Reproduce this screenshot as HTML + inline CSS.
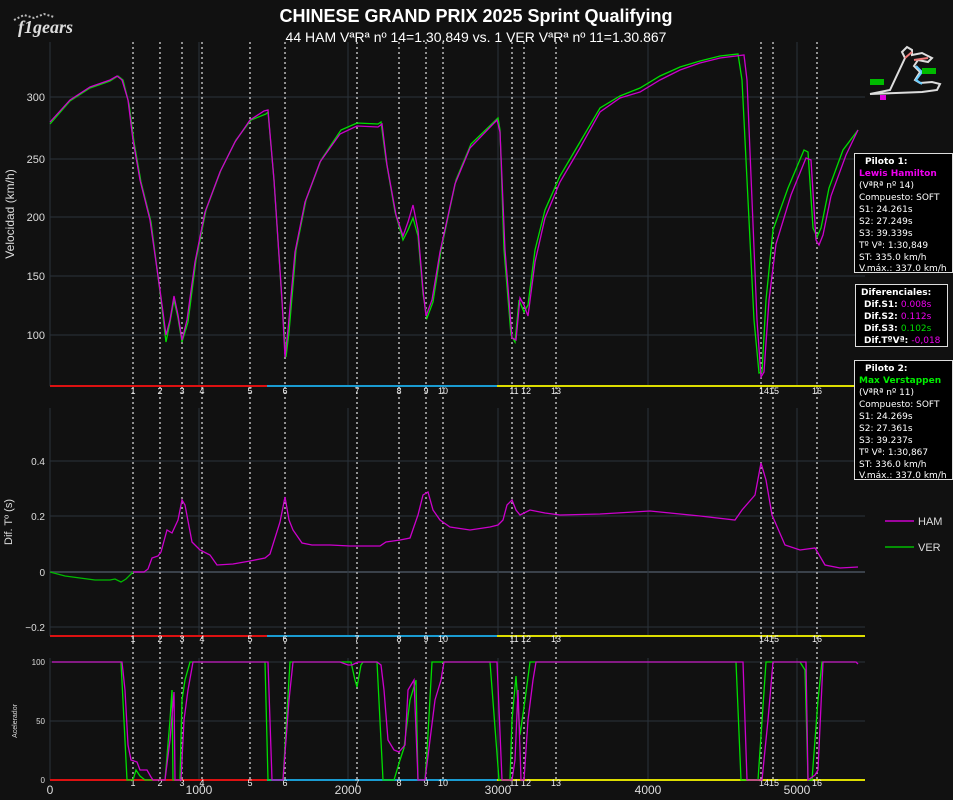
<!DOCTYPE html>
<html><head><meta charset="utf-8"><style>
html,body{margin:0;padding:0;background:#111111;}
svg{display:block;font-family:"Liberation Sans",Verdana,sans-serif;}
</style></head><body>
<svg width="953" height="800" viewBox="0 0 953 800" xmlns="http://www.w3.org/2000/svg">
<defs>
<g id="lbl" fill="#eeeeee" font-size="9" text-anchor="middle">
<text x="133" y="0">1</text><text x="160" y="0">2</text><text x="182" y="0">3</text><text x="202" y="0">4</text><text x="250" y="0">5</text><text x="285" y="0">6</text><text x="357" y="0">7</text><text x="399" y="0">8</text><text x="426" y="0">9</text><text x="443" y="0">10</text><text x="514" y="0">11</text><text x="526" y="0">12</text><text x="556" y="0">13</text><text x="764" y="0">14</text><text x="774" y="0">15</text><text x="817" y="0">16</text>
</g>
</defs>
<rect width="953" height="800" fill="#111111"/>
<!-- logo -->
<text x="18" y="33" fill="#ddd" font-size="18" font-style="italic" font-weight="bold" font-family="Liberation Serif,serif">f1gears</text>
<path d="M14 20 l10 -5 10 3 10 -4 10 3" stroke="#bbb" stroke-width="2" fill="none" stroke-dasharray="2 2"/>
<!-- title -->
<text x="476" y="22" fill="#fff" font-size="18" font-weight="bold" text-anchor="middle">CHINESE GRAND PRIX 2025 Sprint Qualifying</text>
<text x="476" y="42" fill="#fff" font-size="14" text-anchor="middle">44 HAM VªRª nº  14=1.30.849 vs. 1 VER VªRª nº  11=1.30.867</text>

<!-- grids -->
<g stroke="#2b323b" stroke-width="1">
<line x1="50" y1="97" x2="865" y2="97"/><line x1="50" y1="159" x2="865" y2="159"/><line x1="50" y1="217" x2="865" y2="217"/><line x1="50" y1="276" x2="865" y2="276"/><line x1="50" y1="335" x2="865" y2="335"/>
<line x1="50" y1="461" x2="865" y2="461"/><line x1="50" y1="516" x2="865" y2="516"/><line x1="50" y1="572" x2="865" y2="572" stroke="#3a414a" stroke-width="2"/><line x1="50" y1="627" x2="865" y2="627"/>
<line x1="50" y1="662" x2="865" y2="662"/><line x1="50" y1="721" x2="865" y2="721"/>
<line x1="50" y1="42" x2="50" y2="386"/><line x1="199" y1="42" x2="199" y2="386"/><line x1="348" y1="42" x2="348" y2="386"/><line x1="498" y1="42" x2="498" y2="386"/><line x1="648" y1="42" x2="648" y2="386"/><line x1="797" y1="42" x2="797" y2="386"/>
<line x1="50" y1="408" x2="50" y2="636"/><line x1="199" y1="408" x2="199" y2="636"/><line x1="348" y1="408" x2="348" y2="636"/><line x1="498" y1="408" x2="498" y2="636"/><line x1="648" y1="408" x2="648" y2="636"/><line x1="797" y1="408" x2="797" y2="636"/>
<line x1="50" y1="658" x2="50" y2="780"/><line x1="199" y1="658" x2="199" y2="780"/><line x1="348" y1="658" x2="348" y2="780"/><line x1="498" y1="658" x2="498" y2="780"/><line x1="648" y1="658" x2="648" y2="780"/><line x1="797" y1="658" x2="797" y2="780"/>
</g>

<!-- axis labels -->
<g fill="#ddd" font-size="11" text-anchor="end">
<text x="45" y="101">300</text><text x="45" y="163">250</text><text x="45" y="221">200</text><text x="45" y="280">150</text><text x="45" y="339">100</text>
<text x="45" y="465" font-size="10">0.4</text><text x="45" y="520" font-size="10">0.2</text><text x="45" y="576" font-size="10">0</text><text x="45" y="631" font-size="10">−0.2</text>
<text x="45" y="665" font-size="8">100</text><text x="45" y="724" font-size="8">50</text><text x="45" y="783" font-size="8">0</text>
</g>
<g fill="#ddd" font-size="12" text-anchor="middle">
<text x="50" y="794">0</text><text x="199" y="794">1000</text><text x="348" y="794">2000</text><text x="498" y="794">3000</text><text x="648" y="794">4000</text><text x="797" y="794">5000</text>
</g>
<text transform="translate(14,214) rotate(-90)" fill="#ddd" font-size="12" text-anchor="middle">Velocidad (km/h)</text>
<text transform="translate(12,522) rotate(-90)" fill="#ddd" font-size="11" text-anchor="middle">Dif. Tº (s)</text>
<text transform="translate(17,721) rotate(-90)" fill="#ddd" font-size="7" text-anchor="middle">Acelerador</text>

<!-- dashed corner lines -->
<g stroke="#bbb" stroke-width="1.5" stroke-dasharray="2 3">
<path d="M133 42V782M160 42V782M182 42V782M202 42V782M250 42V782M285 42V782M357 42V782M399 42V782M426 42V782M443 42V782M512 42V782M524 42V782M556 42V782M761 42V782M773 42V782M817 42V782"/>
</g>

<!-- sector bars -->
<g stroke-width="2">
<path d="M50 386H267M50 636H267M50 780H267" stroke="#dd1111"/>
<path d="M267 386H497M267 636H497M267 780H497" stroke="#1a9bd1"/>
<path d="M497 386H865M497 636H865M497 780H865" stroke="#dddd00"/>
</g>
<use href="#lbl" y="394"/><use href="#lbl" y="642"/><use href="#lbl" y="786"/>

<!-- speed -->
<polyline fill="none" stroke="#00dd00" stroke-width="1.3" points="50,124 70,101 90,88 110,81 118,76 123,80 129,104 134,142 141,182 151,222 160,292 166,342 170,322 174,300 178,318 182,342 188,322 196,260 206,210 221,170 236,140 251,120 266,114 268,112 274,180 282,302 286,357 289,332 296,250 306,200 321,160 341,130 357,123 378,124 381,122 386,160 395,212 403,240 408,230 413,218 418,236 423,294 427,318 433,302 441,250 456,180 471,144 498,118 500,130 504,250 511,335 515,342 519,300 524,312 528,305 535,250 545,210 560,176 580,142 600,108 620,96 640,88 660,76 680,67 700,61 720,56 738,54 742,80 748,200 754,320 759,373 762,372 766,300 773,230 788,188 804,150 808,152 813,228 817,237 821,228 829,188 843,150 858,130"/>
<polyline fill="none" stroke="#cc00cc" stroke-width="1.3" points="50,122 70,100 90,87 110,80 117,76 122,80 128,100 133,140 140,180 150,220 160,290 166,335 170,320 174,296 178,315 182,340 187,320 195,262 205,212 220,172 235,142 250,120 264,111 268,110 274,180 282,300 285,357 288,330 295,252 305,202 320,162 340,134 357,126 378,127 382,124 387,165 396,215 403,236 408,222 413,205 418,230 423,290 426,316 432,300 440,252 455,184 470,148 497,120 500,132 505,250 512,338 516,340 520,298 524,305 528,316 535,262 545,218 560,182 580,148 600,112 620,98 640,92 660,80 680,70 700,63 720,58 744,55 747,80 752,200 757,320 761,377 764,372 769,300 776,244 791,195 806,158 811,160 816,240 819,245 823,235 831,196 846,155 858,130"/>

<!-- diff -->
<polyline fill="none" stroke="#00bb00" stroke-width="1.3" points="50,572 65,576 80,578 95,580 110,580 115,579 121,582 126,579 133,572"/>
<polyline fill="none" stroke="#cc00cc" stroke-width="1.3" points="133,572 140,572 144,572 148,569 152,558 158,556 161,552 167,530 172,533 178,520 182,500 185,505 192,542 200,550 210,555 217,565 233,564 250,561 265,558 270,554 280,522 285,497 289,520 293,530 302,543 312,545 330,545 350,546 380,546 386,542 400,540 410,538 418,515 423,495 428,492 433,510 440,520 450,527 470,530 490,527 498,525 503,520 507,505 512,500 516,510 520,515 530,510 545,513 560,515 600,514 650,511 700,516 735,520 742,510 755,495 761,463 766,480 772,515 785,545 800,550 815,548 818,553 825,565 840,568 858,567"/>

<!-- throttle -->
<polyline fill="none" stroke="#00dd00" stroke-width="1.3" points="52,662 121,662 127,780 133,780 136,770 140,776 145,780 165,780 170,720 172,690 173,780 180,780 182,700 185,680 190,662 265,662 268,780 283,780 290,662 351,662 355,680 357,687 361,665 363,662 377,662 383,780 394,780 400,760 404,748 410,700 416,680 418,780 425,780 427,752 432,662 490,662 499,780 510,780 512,720 516,676 520,735 525,700 530,662 736,662 741,780 758,780 766,662 800,662 805,670 808,780 812,780 818,700 822,662 855,662"/>
<polyline fill="none" stroke="#cc00cc" stroke-width="1.3" points="52,662 122,662 125,690 128,745 131,760 137,762 140,770 147,770 151,777 153,780 165,780 170,740 174,692 175,780 181,780 184,720 188,690 193,662 268,662 272,780 283,780 289,700 293,662 340,662 348,665 352,665 358,662 377,662 381,665 384,690 388,740 394,750 399,752 405,745 408,690 414,680 418,780 425,780 430,740 435,700 441,680 444,662 497,662 502,780 512,780 515,760 518,690 521,780 524,780 528,720 533,680 536,662 650,662 743,662 747,780 762,780 768,720 773,662 806,662 808,780 815,775 818,770 823,662 856,662 858,664"/>

<!-- legend -->
<line x1="885" y1="521" x2="914" y2="521" stroke="#cc00cc" stroke-width="1.5"/>
<text x="918" y="525" fill="#ddd" font-size="11">HAM</text>
<line x1="885" y1="547" x2="914" y2="547" stroke="#00bb00" stroke-width="1.5"/>
<text x="918" y="551" fill="#ddd" font-size="11">VER</text>

<!-- track map -->
<g fill="none" stroke-width="2">
<path d="M870 94 L890 90 L905 58 L902 52 L907 47 L912 50 L912 55 L922 53 L932 58 L928 62 L918 60 L914 66 L920 72 L915 80 L920 83 L932 82 L940 84 L937 90 L922 92 L896 93 L870 94" stroke="#ddd"/>
<path d="M905 58 L912 52 M914 60 L928 58" stroke="#e77"/>
<path d="M916 66 L922 72 L916 80 L922 84" stroke="#6cf"/>
</g>
<rect x="870" y="79" width="14" height="6" fill="#0b0"/>
<rect x="922" y="68" width="14" height="6" fill="#0b0"/>
<rect x="880" y="95" width="6" height="5" fill="#d0d"/>

<!-- info boxes -->
<g font-size="9" fill="#fff" font-family="Verdana,'DejaVu Sans',sans-serif">
<rect x="854.5" y="153.5" width="98" height="119" fill="#000" stroke="#ddd"/>
<text x="865" y="164" font-weight="bold">Piloto 1:</text>
<text x="859" y="176" font-weight="bold" fill="#e0e">Lewis Hamilton</text>
<text x="859" y="188">(VªRª nº 14)</text>
<text x="859" y="200">Compuesto: SOFT</text>
<text x="859" y="212">S1: 24.261s</text>
<text x="859" y="224">S2: 27.249s</text>
<text x="859" y="236">S3: 39.339s</text>
<text x="859" y="248">Tº Vª: 1:30,849</text>
<text x="859" y="260">ST: 335.0 km/h</text>
<text x="859" y="271">V.máx.: 337.0 km/h</text>

<rect x="855.5" y="284.5" width="92" height="62" fill="#000" stroke="#ddd"/>
<text x="861" y="295" font-weight="bold">Diferenciales:</text>
<text x="864" y="307" font-weight="bold">Dif.S1: <tspan fill="#e0e" font-weight="normal">0.008s</tspan></text>
<text x="864" y="319" font-weight="bold">Dif.S2: <tspan fill="#e0e" font-weight="normal">0.112s</tspan></text>
<text x="864" y="331" font-weight="bold">Dif.S3: <tspan fill="#0d0" font-weight="normal">0.102s</tspan></text>
<text x="864" y="343" font-weight="bold">Dif.TºVª: <tspan fill="#e0e" font-weight="normal">-0,018</tspan></text>

<rect x="854.5" y="360.5" width="98" height="119" fill="#000" stroke="#ddd"/>
<text x="865" y="371" font-weight="bold">Piloto 2:</text>
<text x="859" y="383" font-weight="bold" fill="#0e0">Max Verstappen</text>
<text x="859" y="395">(VªRª nº 11)</text>
<text x="859" y="407">Compuesto: SOFT</text>
<text x="859" y="419">S1: 24.269s</text>
<text x="859" y="431">S2: 27.361s</text>
<text x="859" y="443">S3: 39.237s</text>
<text x="859" y="455">Tº Vª: 1:30,867</text>
<text x="859" y="467">ST: 336.0 km/h</text>
<text x="859" y="478">V.máx.: 337.0 km/h</text>
</g>
</svg>
</body></html>
